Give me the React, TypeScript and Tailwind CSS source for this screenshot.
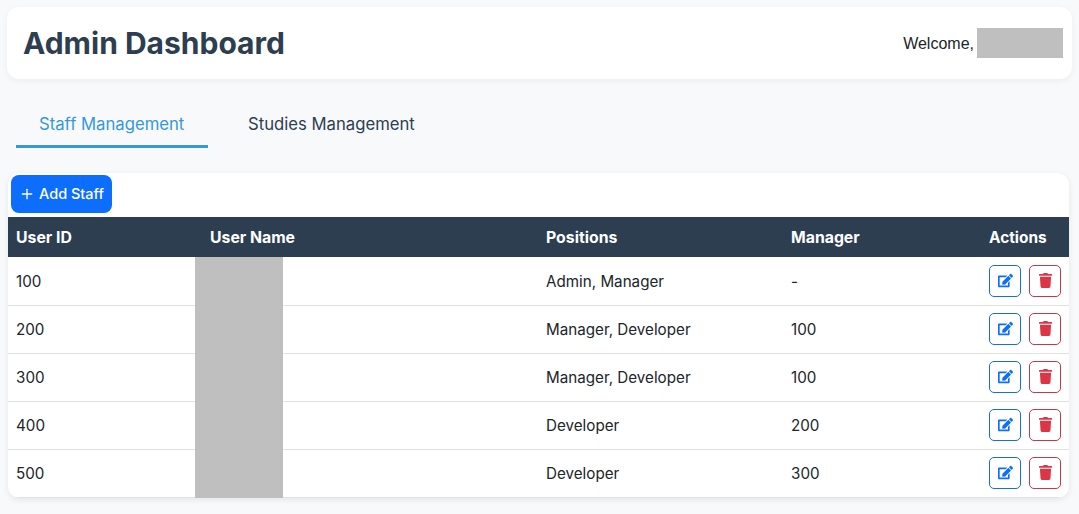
import React from "react";
import { FaEdit, FaTrash } from "react-icons/fa";
import { LuPlus } from "react-icons/lu";

const rows = [
  ["100", "Admin, Manager", "-"],
  ["200", "Manager, Developer", "100"],
  ["300", "Manager, Developer", "100"],
  ["400", "Developer", "200"],
  ["500", "Developer", "300"],
];

export default function App() {
  return (
    <div className="min-h-[514px] bg-[#f8f9fa] pt-[7px] pl-[7px] pr-[7px] font-['Inter',sans-serif] text-[#212529] overflow-hidden">
      <header className="h-[72px] bg-white rounded-[12px] shadow-[0_2px_6px_rgba(0,0,0,0.05)] flex items-center justify-between pl-[16px] pr-[9px]">
        <h1 className="text-[30px] leading-[36px] font-bold text-[#2c3e50]">Admin Dashboard</h1>
        <div className="flex items-center gap-[3px]">
          <span className="font-['Liberation_Sans',sans-serif] text-[16px] pt-[2px]">Welcome,</span>
          <div className="w-[86px] h-[30px] bg-[#bfbfbf]" />
        </div>
      </header>

      <nav className="flex mt-[25px] ml-[9px] text-[16.7px] leading-[24px]">
        <div className="px-[23px] w-[192px] h-[44px] pt-[8px] text-[#3498db] border-b-[3px] border-[#3498db] whitespace-nowrap">Staff Management</div>
        <div className="pl-[40px] h-[44px] pt-[8px] text-[#2c3e50] whitespace-nowrap">Studies Management</div>
      </nav>

      <section className="relative mt-[25px] ml-[1px] mr-[3px] h-[325px] bg-white rounded-[12px] shadow-[0_2px_6px_rgba(0,0,0,0.08)] overflow-hidden text-[15.2px]">
        <div className="pt-[2px] pl-[3px] h-[44px]">
          <button className="h-[38px] w-[101px] bg-[#0d6efd] text-white rounded-[8px] flex items-center justify-center gap-[4px] text-[14.5px] font-medium">
            <LuPlus className="w-[16px] h-[16px]" />
            Add Staff
          </button>
        </div>
        <div className="h-[40px] bg-[#2c3e50] text-white font-bold text-[15.8px] flex items-center">
          <div className="w-[202px] pl-[8px] pt-[1px]">User ID</div>
          <div className="w-[336px] pt-[1px]">User Name</div>
          <div className="w-[245px] pt-[1px]">Positions</div>
          <div className="w-[198px] pt-[1px]">Manager</div>
          <div className="pt-[1px] text-[15.4px]">Actions</div>
        </div>
        <div className="h-[1px]" />
        {rows.map((r) => (
          <div key={r[0]} className="h-[48px] border-b border-[#dee2e6] last:border-b-0 flex items-center">
            <div className="w-[202px] pl-[8px] pt-[2px]">{r[0]}</div>
            <div className="w-[336px]" />
            <div className="w-[245px] pt-[2px]">{r[1]}</div>
            <div className="w-[198px] pt-[2px]">{r[2]}</div>
            <div className="flex gap-[8px] mb-[2px]">
              <button className="w-[32px] h-[32px] border border-[#1a6fd0] rounded-[5px] flex items-center justify-center text-[#0d6efd]">
                <FaEdit className="w-[15px] h-[15px]" />
              </button>
              <button className="w-[32px] h-[32px] border border-[#c23a4b] rounded-[5px] flex items-center justify-center text-[#dc3545]">
                <FaTrash className="w-[13px] h-[15px]" />
              </button>
            </div>
          </div>
        ))}
        <div className="absolute left-[187px] top-[84px] w-[88px] h-[241px] bg-[#bfbfbf]" />
      </section>
    </div>
  );
}
